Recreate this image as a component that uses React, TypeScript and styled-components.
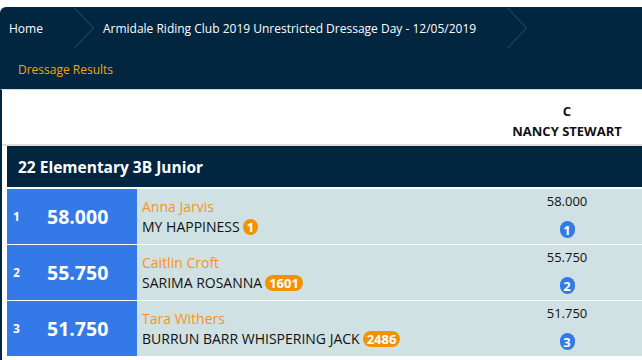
import React from 'react';
import styled, { createGlobalStyle } from 'styled-components';

const GlobalStyle = createGlobalStyle`
  body {
    margin: 0;
    background: #ffffff;
    font-family: 'Open Sans', 'Liberation Sans', sans-serif;
  }
`;

const NAVY = '#02263f';

const Page = styled.div`
  padding-top: 7px;
  width: 642px;
  height: 353px;
  overflow: hidden;
`;

const Header = styled.header`
  background: ${NAVY};
  border-top-left-radius: 6px;
  height: 82px;
  display: flex;
  flex-direction: column;
`;

const Crumbs = styled.nav`
  height: 42px;
  display: flex;
  align-items: center;
  padding-left: 9px;
`;

const Crumb = styled.span`
  color: #ffffff;
  font-size: 12px;
  margin-right: 31px;
  white-space: nowrap;
`;

const Chevron = styled.svg`
  flex: none;
  margin-right: 9px;
`;

const SubNav = styled.div`
  height: 40px;
  display: flex;
  align-items: center;
  padding-left: 18px;
  color: #f5a50a;
  font-size: 12px;
`;

const Body = styled.main`
  border-left: 2px solid ${NAVY};
  border-top: 1px solid #d5d5d5;
  height: 270px;
`;

const JudgeHead = styled.div`
  height: 54px;
  display: flex;
  justify-content: flex-end;
  border-bottom: 2px solid #dedede;
`;

const JudgeCell = styled.div`
  width: 130px;
  margin-right: 10px;
  display: flex;
  flex-direction: column;
  align-items: center;
  justify-content: center;
  font-size: 13px;
  font-weight: 700;
  color: #111;
  line-height: 20px;
  padding-top: 8px;
  white-space: nowrap;
`;

const Section = styled.div`
  margin-left: 5px;
  display: flex;
  flex-direction: column;
  gap: 1px;
`;

const SectionTitle = styled.h2`
  margin: 0 0 1px;
  background: ${NAVY};
  color: #ffffff;
  height: 41px;
  display: flex;
  align-items: center;
  padding-left: 11px;
  font-size: 15.5px;
  font-weight: 700;
`;

const Row = styled.div`
  display: grid;
  grid-template-columns: 130px 1fr 130px 10px;
  height: 55px;
  background: #d0e1e3;
`;

const PlaceCell = styled.div`
  background: #3479e8;
  color: #ffffff;
  display: flex;
  align-items: center;
  font-weight: 700;
`;

const Rank = styled.span`
  font-size: 12px;
  width: 40px;
  padding-left: 6px;
  box-sizing: border-box;
`;

const Score = styled.span`
  font-size: 19.5px;
`;

const Names = styled.div`
  display: flex;
  flex-direction: column;
  justify-content: center;
  padding-left: 5px;
  font-size: 14px;
  line-height: 20px;
  padding-top: 1px;
`;

const Rider = styled.span`
  color: #f7931e;
`;

const Horse = styled.span`
  color: #111;
  display: flex;
  align-items: center;
  gap: 3px;
`;

const Badge = styled.span<{ $tone: 'orange' | 'blue' }>`
  display: inline-flex;
  align-items: center;
  justify-content: center;
  min-width: 15px;
  height: ${(p) => (p.$tone === 'orange' ? 16 : 17)}px;
  padding: 0 ${(p) => (p.$tone === 'orange' ? 4 : 0)}px;
  box-sizing: border-box;
  border-radius: 8px;
  background: ${(p) => (p.$tone === 'orange' ? '#f39200' : '#3479e8')};
  color: #ffffff;
  font-size: 13px;
  font-weight: 700;
  line-height: 16px;
`;

const JudgeScore = styled.div`
  display: flex;
  flex-direction: column;
  align-items: center;
  justify-content: flex-start;
  padding-top: 3px;
  gap: 11px;
  font-size: 13px;
  color: #111;
  line-height: 18px;
`;

const results = [
  { place: 1, score: '58.000', rider: 'Anna Jarvis', horse: 'MY HAPPINESS', num: '1' },
  { place: 2, score: '55.750', rider: 'Caitlin Croft', horse: 'SARIMA ROSANNA', num: '1601' },
  { place: 3, score: '51.750', rider: 'Tara Withers', horse: 'BURRUN BARR WHISPERING JACK', num: '2486' },
];

const Sep = () => (
  <Chevron width="20" height="42" viewBox="0 0 20 42">
    <path d="M0.5 1 L19.5 21 L0.5 41" fill="none" stroke="#1d3e5b" strokeWidth="1.3" />
  </Chevron>
);

export default function App() {
  return (
    <Page>
      <GlobalStyle />
      <Header>
        <Crumbs>
          <Crumb>Home</Crumb>
          <Sep />
          <Crumb>Armidale Riding Club 2019 Unrestricted Dressage Day - 12/05/2019</Crumb>
          <Sep />
        </Crumbs>
        <SubNav>Dressage Results</SubNav>
      </Header>
      <Body>
        <JudgeHead>
          <JudgeCell>
            <span>C</span>
            <span>NANCY STEWART</span>
          </JudgeCell>
        </JudgeHead>
        <Section>
          <SectionTitle>22 Elementary 3B Junior</SectionTitle>
          {results.map((r) => (
            <Row key={r.place}>
              <PlaceCell>
                <Rank>{r.place}</Rank>
                <Score>{r.score}</Score>
              </PlaceCell>
              <Names>
                <Rider>{r.rider}</Rider>
                <Horse>
                  {r.horse} <Badge $tone="orange">{r.num}</Badge>
                </Horse>
              </Names>
              <JudgeScore>
                <span>{r.score}</span>
                <Badge $tone="blue">{r.place}</Badge>
              </JudgeScore>
              <span />
            </Row>
          ))}
        </Section>
      </Body>
    </Page>
  );
}
